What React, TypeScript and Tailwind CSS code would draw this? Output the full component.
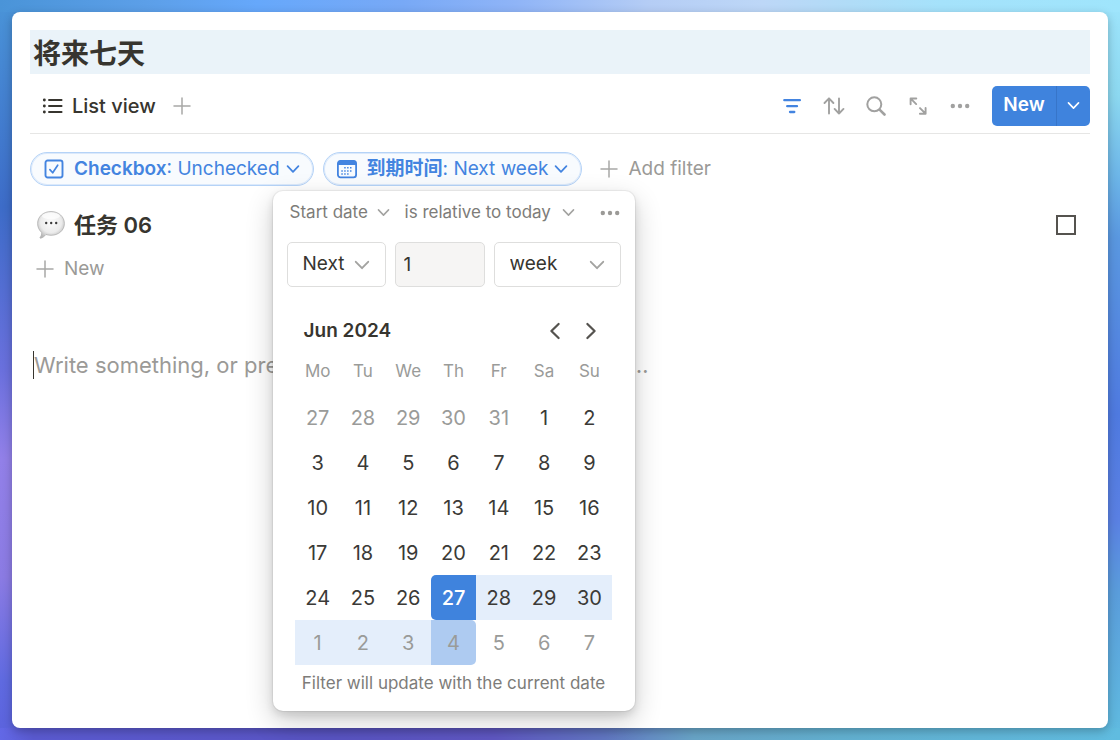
import { useState } from "react";
import type { ReactNode } from "react";

const CJK = "font-[Inter,'Noto_Sans_CJK_SC',sans-serif]";

function Chevron({ size, className = "", stroke = 2 }: { size: number; className?: string; stroke?: number }) {
  return (
    <svg width={size} height={size} viewBox="0 0 16 16" fill="none" stroke="currentColor" strokeWidth={stroke} strokeLinecap="round" strokeLinejoin="round" className={className} aria-hidden="true">
      <path d="M1.800 4.800 8 11.200l6.200-6.400" />
    </svg>
  );
}

function Plus({ className = "" }: { className?: string }) {
  return (
    <svg width="18" height="18" viewBox="0 0 18 18" fill="none" stroke="currentColor" strokeWidth="1.5" strokeLinecap="round" className={className} aria-hidden="true">
      <path d="M9 1v16M1 9h16" />
    </svg>
  );
}

function Dots({ size }: { size: number }) {
  return (
    <svg width={size} height={size} viewBox="0 0 20 20" fill="currentColor" aria-hidden="true">
      <circle cx="2.8" cy="10" r="2.2" />
      <circle cx="10" cy="10" r="2.2" />
      <circle cx="17.2" cy="10" r="2.2" />
    </svg>
  );
}

function ListIcon() {
  return (
    <svg width="22" height="18" viewBox="0 0 22 18" fill="none" stroke="currentColor" strokeLinecap="round" aria-hidden="true">
      <path strokeWidth="1.900" d="M7 3h12.600M7 9h12.600M7 15h12.600" />
      <path strokeWidth="2.800" d="M2.300 3h.1M2.300 9h.1M2.300 15h.1" />
    </svg>
  );
}

function FilterIcon() {
  return (
    <svg width="20" height="20" viewBox="0 0 20 20" fill="none" stroke="currentColor" strokeWidth="2.300" strokeLinecap="round" aria-hidden="true">
      <path d="M2.300 4.200h15.600M5.200 10.200h9.800M8 16h4.300" />
    </svg>
  );
}

function SortIcon() {
  return (
    <svg width="22" height="20" viewBox="0 0 22 20" fill="none" stroke="currentColor" strokeWidth="1.900" strokeLinecap="round" strokeLinejoin="round" aria-hidden="true">
      <path d="M6 17.500V2.400M1.500 7 6 2.400 10.400 7M16 2.400v15.100M11.600 12.900 16 17.500l4.500-4.600" />
    </svg>
  );
}

function SearchIcon() {
  return (
    <svg width="20" height="20" viewBox="0 0 20 20" fill="none" stroke="currentColor" strokeLinecap="round" aria-hidden="true">
      <circle cx="8.300" cy="8.300" r="7" strokeWidth="2" />
      <path d="m13.800 13.800 4.700 4.700" strokeWidth="2.600" />
    </svg>
  );
}

function ExpandIcon() {
  return (
    <svg width="18" height="18" viewBox="0 0 18 18" fill="none" stroke="currentColor" strokeWidth="1.900" strokeLinecap="round" strokeLinejoin="round" aria-hidden="true">
      <path d="M1.600 7.200V1.500h5.700M1.800 1.700l5.400 5.400M16.600 11v5.700h-5.700M16.400 16.500l-5.400-5.400" />
    </svg>
  );
}

function CheckIcon() {
  return (
    <svg width="20" height="20" viewBox="0 0 20 20" fill="none" stroke="currentColor" strokeLinecap="round" strokeLinejoin="round" aria-hidden="true">
      <rect x="1.500" y="1.500" width="17" height="17" rx="2.200" strokeWidth="1.900" />
      <path d="m5.900 10.600 2.800 3.200 5-7.600" strokeWidth="1.700" />
    </svg>
  );
}

function CalendarIcon() {
  return (
    <svg width="20" height="20" viewBox="0 0 20 20" fill="none" aria-hidden="true">
      <rect x="0.900" y="1.900" width="18.200" height="16.400" rx="2.600" stroke="currentColor" strokeWidth="1.800" />
      <path d="M1 3.800Q1 1.500 3.400 1.500h13.200Q19 1.500 19 3.800v2.200H1z" fill="currentColor" />
      <path stroke="currentColor" strokeWidth="1.500" strokeDasharray="1.500 1.400" d="M7.200 8.800h8.700M4.300 11.900h11.600M4.300 15h8.700" />
    </svg>
  );
}

function Balloon() {
  return (
    <svg width="30" height="30" viewBox="0 0 30 30" aria-hidden="true">
      <defs>
        <radialGradient id="balloon" cx="0.5" cy="0.4" r="0.600">
          <stop offset="0" stopColor="#fbfbfb" />
          <stop offset="0.650" stopColor="#ececec" />
          <stop offset="1" stopColor="#b9b9b9" />
        </radialGradient>
      </defs>
      <path d="M15 1.500c7.700 0 13.400 5.300 13.400 12S22.700 25.300 15 25.300c-1.800 0-3.500-.3-5-.8-1.500 1.700-3.400 3.300-5.300 3.700-.8.100-.9-.6-.4-1.100 1.100-1.200 1.500-3 1.300-4.700C3.100 20.200 1.600 17.100 1.600 13.500c0-6.700 5.700-12 13.400-12z" fill="url(#balloon)" stroke="#a9a9a9" strokeWidth="0.700" />
      <ellipse cx="15" cy="6" rx="9" ry="3.200" fill="#fff" opacity="0.700" />
      <g fill="#3c3c3c">
        <circle cx="10.200" cy="13" r="1.200" />
        <circle cx="15.200" cy="13" r="1.200" />
        <circle cx="20.200" cy="13" r="1.200" />
      </g>
    </svg>
  );
}

function IconButton({ label, children, className = "" }: { label: string; children: ReactNode; className?: string }) {
  return (
    <button type="button" aria-label={label} className={`flex h-10 w-[42px] items-center justify-center ${className}`}>
      {children}
    </button>
  );
}

function Pill({ icon, name, value }: { icon: ReactNode; name: string; value: string }) {
  return (
    <button type="button" className="flex h-[34px] items-center rounded-full border border-[#b5d3f7] bg-[#f8fbfe] px-[13px] text-[19px] whitespace-nowrap text-[#4384e0] shadow-[inset_0_0_0_1px_#dbe9fb]">
      {icon}
      <span className="ml-2.5">
        <span className="font-semibold">{name}</span>: {value}
      </span>
      <Chevron size={14} className="ml-1.5" />
    </button>
  );
}

function Dropdown({ label, options, boxClass, selectClass, chevron }: { label: string; options: string[]; boxClass: string; selectClass: string; chevron: number }) {
  return (
    <div className={`grid items-center ${boxClass}`}>
      <select aria-label={label} className={`w-full appearance-none bg-transparent [grid-area:1/1] focus:outline-none ${selectClass}`}>
        {options.map((o) => (
          <option key={o}>{o}</option>
        ))}
      </select>
      <Chevron size={chevron} stroke={1.9} className="pointer-events-none justify-self-end text-[#a3a3a1] [grid-area:1/1]" />
    </div>
  );
}

const WEEKDAYS = ["Mo", "Tu", "We", "Th", "Fr", "Sa", "Su"];
const FIRST = Date.UTC(2024, 4, 27);
const DAY = 86400000;
const WEEKS = Array.from({ length: 6 }, (_, w) => Array.from({ length: 7 }, (_, d) => new Date(FIRST + (w * 7 + d) * DAY)));
const START = Date.UTC(2024, 5, 27);
const END = Date.UTC(2024, 6, 4);

function dayClass(date: Date) {
  const t = date.getTime();
  if (t === START) return "rounded-l-[5px] bg-[#3f83dd] text-white font-medium";
  const tone = date.getUTCMonth() === 5 ? "text-[#3b3a37]" : "text-[#9a9b99]";
  if (t === END) return `rounded-r-[5px] bg-[#aecbf1] ${tone}`;
  if (t > START && t < END) return `bg-[#e4eefb] ${tone}`;
  return tone;
}

function DatePopover() {
  const [amount, setAmount] = useState("1");
  return (
    <div role="dialog" aria-label="Date filter" className="absolute top-[39px] left-[-50px] z-10 w-[362px] rounded-[10px] bg-white pb-2 shadow-[0_0_0_1px_rgba(15,15,15,0.05),0_4px_8px_rgba(15,15,15,0.12),0_10px_28px_rgba(15,15,15,0.2)]">
      <div className="flex h-[43px] items-center pr-[15px] pl-[17px] text-[17px] text-[#7d7c79]">
        <Dropdown label="Date property" options={["Start date", "End date"]} boxClass="w-[100px]" selectClass="pr-5" chevron={13} />
        <Dropdown label="Condition" options={["is relative to today", "is", "is before"]} boxClass="ml-[15px] w-[170px]" selectClass="pr-5" chevron={13} />
        <button type="button" aria-label="Filter options" className="ml-auto text-[#9b9a97]">
          <Dots size={20} />
        </button>
      </div>
      <div className="mx-3.5 mt-2 flex gap-[9px] text-[19px] text-[#37352f]">
        <Dropdown label="Direction" options={["Next", "Past", "This"]} boxClass="h-[45px] w-[99px] rounded-[5px] border border-[#dededd] px-[15px]" selectClass="" chevron={16} />
        <input aria-label="Amount" value={amount} onChange={(e) => setAmount(e.target.value)} className="h-[45px] w-[90px] rounded-[5px] border border-[#dededd] bg-[#f6f5f4] px-2 focus:outline-none" />
        <Dropdown label="Unit" options={["week", "day", "month", "year"]} boxClass="h-[45px] flex-1 rounded-[5px] border border-[#dededd] px-[15px]" selectClass="" chevron={16} />
      </div>
      <div className="mt-6 flex h-10 items-center pr-[26px] pl-[31px] text-[#37352f]">
        <h2 className="text-[19px] font-semibold">Jun 2024</h2>
        <button type="button" aria-label="Previous month" className="ml-auto flex h-9 w-9 items-center justify-center text-[#55534f]">
          <Chevron size={18} className="rotate-90" />
        </button>
        <button type="button" aria-label="Next month" className="flex h-9 w-9 items-center justify-center text-[#55534f]">
          <Chevron size={18} className="-rotate-90" />
        </button>
      </div>
      <table className="mx-auto w-[317px] table-fixed border-collapse text-xl">
        <thead>
          <tr>
            {WEEKDAYS.map((d) => (
              <th key={d} scope="col" className="h-[44px] p-0 pb-0.5 text-[17px] font-normal text-[#9a9b99]">
                {d}
              </th>
            ))}
          </tr>
        </thead>
        <tbody>
          {WEEKS.map((week) => (
            <tr key={week[0].getTime()}>
              {week.map((date) => (
                <td key={date.getTime()} className="p-0">
                  <button type="button" className={`block h-[45px] w-full text-center ${dayClass(date)}`}>
                    {date.getUTCDate()}
                  </button>
                </td>
              ))}
            </tr>
          ))}
        </tbody>
      </table>
      <p className="flex h-[38px] items-center justify-center text-[17px] whitespace-nowrap text-[#7d7c79]">Filter will update with the current date</p>
    </div>
  );
}

export default function App() {
  return (
    <div className={`flex min-h-screen p-3 text-[#37352f] [background:linear-gradient(to_right,#4a94d8,#5c9fe8_13%,#66a8fb_23%,#78a9f6_36%,#8fb4f7_46%,#b5cdf5_58%,#bdd7f7_68%,#b0dcf7_76%,#a5e2fb_84%,#9fe5fc)_top/100%_12px_no-repeat,linear-gradient(to_right,#6268e6,#5a5ad0_3%,#5a55c4_30%,#6058c4_44%,#6278c4_54%,#68a4c6_62%,#62b0d0_75%,#60bce0)_bottom/100%_12px_no-repeat,linear-gradient(to_bottom,#4a94d8,#3d6cc8_28%,#6a70dd_50%,#9280e8_62%,#8b7be3_78%,#5f6ae0_92%,#5b62dd)_left/50%_100%_no-repeat,linear-gradient(to_bottom,#9fe5fc,#8cd8f0_13%,#6cb5e8_24%,#5a98e0_32%,#4f7ae0_56%,#5a80e3_70%,#5a9ddb_80%,#60bce0)_right/50%_100%_no-repeat] ${CJK}`}>
      <main className="flex-1 rounded-lg bg-white px-[18px] pt-[18px] shadow-[0_3px_10px_rgba(0,0,0,0.25)]">
        <h1 className="flex h-[44px] items-center bg-[#eaf3f9] pt-[3px] pl-[3px] text-[28px] font-bold">将来七天</h1>
        <div className="flex h-[60px] items-center border-b border-[#e6e6e5] pt-1">
          <button type="button" className="flex items-center gap-2 pl-3 text-xl font-medium whitespace-nowrap">
            <ListIcon />
            List view
          </button>
          <button type="button" aria-label="Add view" className="ml-[17px] text-[#a8a8a6]">
            <Plus />
          </button>
          <div className="ml-auto flex text-[#a1a1a0]">
            <IconButton label="Filter" className="text-[#4384e0]">
              <FilterIcon />
            </IconButton>
            <IconButton label="Sort">
              <SortIcon />
            </IconButton>
            <IconButton label="Search">
              <SearchIcon />
            </IconButton>
            <IconButton label="Expand">
              <ExpandIcon />
            </IconButton>
            <IconButton label="More">
              <Dots size={20} />
            </IconButton>
          </div>
          <div className="ml-[11px] flex h-10 overflow-hidden rounded-[5px] bg-[#3f83dd] text-white">
            <button type="button" className="w-[64px] text-[19px] font-semibold">
              New
            </button>
            <button type="button" aria-label="New options" className="flex w-[34px] items-center justify-center border-l border-[#3775c9]">
              <Chevron size={13} />
            </button>
          </div>
        </div>
        <div className="mt-[18px] flex items-center gap-[9px]">
          <Pill icon={<CheckIcon />} name="Checkbox" value="Unchecked" />
          <div className="relative">
            <Pill icon={<CalendarIcon />} name="到期时间" value="Next week" />
            <DatePopover />
          </div>
          <button type="button" className="ml-[9px] flex items-center gap-2.5 text-[19px] whitespace-nowrap text-[#9b9a97]">
            <Plus className="text-[#a8a8a6]" />
            Add filter
          </button>
        </div>
        <div className="mt-[17px] flex h-[44px] items-center pr-3.5 pl-1.5">
          <Balloon />
          <a href="#task-06" className="ml-2 text-[22px] font-semibold">
            任务 06
          </a>
          <input type="checkbox" aria-label="任务 06" className="ml-auto h-5 w-5 appearance-none border-2 border-[#55534f]" />
        </div>
        <button type="button" className="flex h-[44px] items-center gap-2.5 pl-1.5 text-[19px] text-[#9b9a97]">
          <Plus className="text-[#a8a8a6]" />
          New
        </button>
        <input aria-label="Page text" placeholder="Write something, or press ‘space’ for AI, ‘/’ for commands…" className="mt-[60px] ml-[3px] block h-7 w-full border-l border-[#37352f] text-[22px] placeholder:text-[#9b9a97] focus:outline-none" />
      </main>
    </div>
  );
}
